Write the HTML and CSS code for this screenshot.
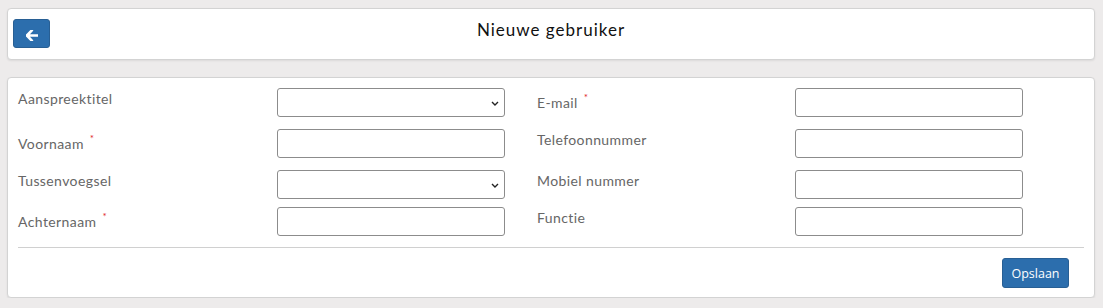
FILE: index.html
```html
<!DOCTYPE html>
<html lang="nl">
<head>
    <meta charset="UTF-8">
    <meta name="viewport" content="width=device-width, initial-scale=1.0">
    <title>Nieuwe gebruiker</title>
    <link rel="stylesheet" href="styles.css">
</head>
<body>
    <div class="card header-card">
        <button class="btn btn-back" type="button" aria-label="Terug">
            <svg width="12" height="11" viewBox="0 0 12 11">
                <path d="M5.6 0.6 L0.9 5.5 L5.6 10.4 M1.2 5.5 H11.2" fill="none" stroke="#fff" stroke-width="2.6" stroke-linecap="square" stroke-linejoin="miter"/>
            </svg>
        </button>
        <h1 class="page-title">Nieuwe gebruiker</h1>
        <span></span>
    </div>

    <form class="card form-card">
        <div class="form-grid">
            <label class="form-label" for="title">Aanspreektitel</label>
            <div class="field">
                <select id="title" class="form-control"><option></option></select>
                <svg class="chevron" width="8" height="5" viewBox="0 0 8 5"><path d="M1 1 L4 4 L7 1" fill="none" stroke="#222" stroke-width="1.4"/></svg>
            </div>
            <label class="form-label required" for="email">E-mail <span class="star">*</span></label>
            <div class="field"><input type="email" id="email" class="form-control"></div>

            <label class="form-label required" for="firstname">Voornaam <span class="star">*</span></label>
            <div class="field"><input type="text" id="firstname" class="form-control"></div>
            <label class="form-label" for="phone">Telefoonnummer</label>
            <div class="field"><input type="text" id="phone" class="form-control"></div>

            <label class="form-label" for="infix">Tussenvoegsel</label>
            <div class="field">
                <select id="infix" class="form-control"><option></option></select>
                <svg class="chevron" width="8" height="5" viewBox="0 0 8 5"><path d="M1 1 L4 4 L7 1" fill="none" stroke="#222" stroke-width="1.4"/></svg>
            </div>
            <label class="form-label" for="mobile">Mobiel nummer</label>
            <div class="field"><input type="text" id="mobile" class="form-control"></div>

            <label class="form-label required" for="lastname">Achternaam <span class="star">*</span></label>
            <div class="field"><input type="text" id="lastname" class="form-control"></div>
            <label class="form-label" for="function">Functie</label>
            <div class="field"><input type="text" id="function" class="form-control"></div>
        </div>

        <hr class="divider">

        <div class="actions">
            <button type="submit" class="btn btn-save">Opslaan</button>
        </div>
    </form>
</body>
</html>
```

FILE: styles.css
```css
body {
    font-family: Lato, "Open Sans", sans-serif;
    margin: 0;
    padding: 8px 8px 0 7px;
    background-color: #edebeb;
}

.card {
    background-color: #fff;
    border: 1px solid #d3d3d3;
    border-radius: 4px;
    box-shadow: 0px 1px 2px rgba(0, 0, 0, 0.08);
}

.header-card {
    display: grid;
    grid-template-columns: 1fr auto 1fr;
    align-items: start;
    padding: 10px 5px 11px;
}

.btn {
    background-color: #2c6ead;
    color: #fff;
    border: 1px solid #285f94;
    border-radius: 3px;
    cursor: pointer;
}

.btn-back {
    justify-self: start;
    width: 37px;
    height: 29px;
    padding: 3px 0 0;
    display: flex;
    align-items: center;
    justify-content: center;
}

.page-title {
    margin: 0;
    font-size: 17px;
    line-height: 22px;
    font-weight: 400;
    color: #111;
    letter-spacing: 1px;
}

.form-card {
    margin: 17px 0 0;
    padding: 10px 10px 9px;
}

.form-grid {
    display: grid;
    grid-template-columns: 259px 260px 258px 228px;
    row-gap: 8px;
    align-items: start;
}

.form-label {
    font-size: 14px;
    line-height: 20px;
    color: #666;
    padding-top: 1px;
    letter-spacing: 0.4px;
}

.form-label.required {
    padding: 5px 0 8px;
}

.star {
    color: #e0262b;
    font-size: 10px;
    line-height: 0;
    position: relative;
    top: -7px;
    margin-left: 2px;
}

.field {
    position: relative;
    width: 228px;
}

.form-control {
    display: block;
    box-sizing: border-box;
    width: 228px;
    height: 29px;
    margin: 0;
    padding: 4px 6px;
    border: 1px solid #8c8c8c;
    border-radius: 3px;
    background-color: #fff;
    font-family: inherit;
    font-size: 14px;
}

select.form-control {
    appearance: none;
    -webkit-appearance: none;
}

.chevron {
    position: absolute;
    right: 6px;
    top: 13px;
    pointer-events: none;
}

.divider {
    border: none;
    border-top: 1px solid #d0d0d0;
    margin: 7px 0 10px;
}

.actions {
    display: flex;
    justify-content: flex-end;
    padding-right: 15px;
}

.btn-save {
    width: 67px;
    height: 30px;
    padding: 0;
    font-family: "Open Sans", sans-serif;
    font-size: 12.5px;
}

.btn:hover {
    background-color: #245b8f;
}
```
